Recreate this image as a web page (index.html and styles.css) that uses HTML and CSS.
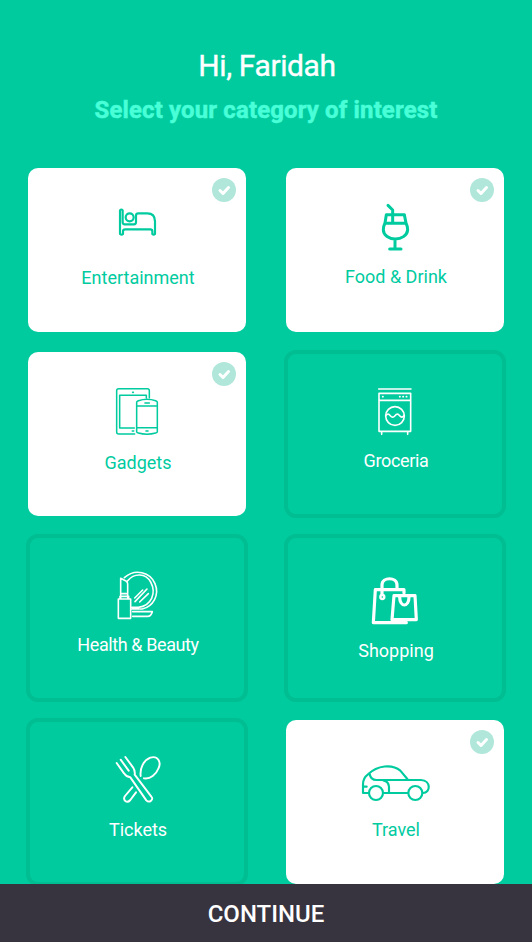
FILE: index.html
```html
<!DOCTYPE html>
<html lang="en">
<head>
<meta charset="utf-8">
<title>Select categories</title>
<link rel="stylesheet" href="styles.css">
</head>
<body>
<main class="screen">
  <header class="intro">
    <h1 class="greeting">Hi, Faridah</h1>
    <p class="prompt">Select your category of interest</p>
  </header>
  <section class="categories">
    <article class="card selected entertainment">
      <svg class="check" viewBox="0 0 24 24"><circle cx="12" cy="12" r="12"/><path d="M8 12.5l3 3 5.5-6"/></svg>
      <svg class="icon" viewBox="0 0 222 195" stroke-width="6.5"><path d="M60 117V46q4-5 8 0V82q0 6 6 6H102q6 0 6-6V62q0-7 7-7H142Q165 55 165 79V117q-4 4-8 0V109q0-6-6-6H76q-7 0-7 6V117q-4 4-9 0Z"/><circle cx="89" cy="67" r="12"/></svg>
      <span class="label">Entertainment</span>
    </article>
    <article class="card selected food">
      <svg class="check" viewBox="0 0 24 24"><circle cx="12" cy="12" r="12"/><path d="M8 12.5l3 3 5.5-6"/></svg>
      <svg class="icon" viewBox="-6 0 222 195" stroke-width="9"><path d="M84 31L98 45V84M79 59H133L138 84Q143 94 143 105C141 122 124 132 106 132S70 121 70 104Q70 94 75 84ZM75 85H138M105 133V162M89 162H123"/></svg>
      <span class="label">Food &amp; Drink</span>
    </article>
    <article class="card selected gadgets">
      <svg class="check" viewBox="0 0 24 24"><circle cx="12" cy="12" r="12"/><path d="M8 12.5l3 3 5.5-6"/></svg>
      <svg class="icon" viewBox="0 0 222 195" stroke-width="4.6"><path d="M148 53V32q0-6-6-6H56q-6 0-6 6V156q0 6 6 6H104M139 53V46H59V144H103M110 67Q110 64 115 62 141 53 167 62 172 64 172 67V155Q172 158 167 159 141 166 115 159 110 158 110 155ZM110 78H172M110 143H172"/><path stroke-width="5" d="M98 37h2M97 153h4M135 69h13M138 153h6"/></svg>
      <span class="label">Gadgets</span>
    </article>
    <article class="card outlined groceria">
      <svg class="icon" viewBox="-6 0 222 195" stroke-width="4.8"><path d="M56 27H153M57 40H152V154H57ZM57 61H152M65 155V163M143 155V163"/><circle cx="105" cy="108" r="28"/><path d="M77 107Q84 98 91 107T105 107 119 107 133 106"/><path stroke-width="5" d="M68 50h1M119 50h1M129 50h1M139 50h1"/></svg>
      <span class="label">Groceria</span>
    </article>
    <article class="card outlined health">
      <svg class="icon" viewBox="0 0 222 195" stroke-width="4.8"><path d="M62 94V49L78 57Q83 60 83 65V94M63 95H83V109M62 95V110M55 111H92V169H55ZM60 110V103H86V110M73 47C105 18 151 30 165 65 179 99 160 133 127 141H96M83 56C103 32 137 33 152 60 170 94 154 131 115 136H96M98 149H157Q153 163 143 163H98M105 119L141 81M119 120L145 95M104 108L128 84"/></svg>
      <span class="label">Health &amp; Beauty</span>
    </article>
    <article class="card outlined shopping">
      <svg class="icon" viewBox="-6 0 222 195" stroke-width="9.5"><path d="M66 79V51C66 26 111 26 111 51V62M132 75V65H46L40 164H139M102 83H165L169 155H96ZM119 87C119 119 147 119 147 87"/><circle cx="67" cy="87" r="6" stroke-width="7"/></svg>
      <span class="label">Shopping</span>
    </article>
    <article class="card outlined tickets">
      <svg class="icon" viewBox="0 0 222 195" stroke-width="5.8"><path d="M50 45L72 76Q79 87 91 88L139 157Q146 164 153 158T154 146L104 80Q106 69 99 58L76 27M62 35L86 68M97 118L75 144Q69 153 76 159T91 156L108 133M122 84C119 60 131 37 151 29 174 22 184 42 176 60 168 80 151 94 132 91"/></svg>
      <span class="label">Tickets</span>
    </article>
    <article class="card selected travel">
      <svg class="check" viewBox="0 0 24 24"><circle cx="12" cy="12" r="12"/><path d="M8 12.5l3 3 5.5-6"/></svg>
      <svg class="icon wide" viewBox="0 0 270 180" stroke-width="6.5"><path d="M57 114H39V88Q39 69 54 58C82 31 126 26 151 47L172 72M59 57Q62 75 79 75H213C244 76 242 114 219 114M100 114H173M100 76Q116 79 117 96V114M40 95H50"/><circle cx="78" cy="114" r="21"/><circle cx="196" cy="114" r="21"/></svg>
      <span class="label">Travel</span>
    </article>
  </section>
  <button class="continue" type="button">CONTINUE</button>
</main>
</body>
</html>
```
FILE: styles.css
```css
* { box-sizing: border-box; }
body { margin: 0; background: #00cb9f; font-family: Roboto, "Liberation Sans", sans-serif; }
.screen { width: 532px; height: 942px; display: flex; flex-direction: column; overflow: hidden; }
.intro { height: 168px; flex: none; padding-top: 46px; text-align: center; }
.greeting { margin: 0; padding-left: 2px; font-size: 30px; line-height: 40px; font-weight: 400; color: #fff; -webkit-text-stroke: .35px #fff; letter-spacing: -.4px; }
.prompt { margin: 8px 0 0; font-size: 24px; line-height: 32px; font-weight: 700; color: #48ffd8; -webkit-text-stroke: .5px #48ffd8; letter-spacing: .12px; }
.categories { display: grid; grid-template-columns: 218px 218px; grid-auto-rows: 164px; gap: 20px 40px; padding: 0 28px; height: 716px; flex: none; overflow: hidden; }
.card { position: relative; display: flex; flex-direction: column; align-items: center; border-radius: 10px; }
.selected { background: #fff; color: #00cb9f; }
.outlined { color: #fff; }
.outlined::before { content: ""; position: absolute; inset: -2px; border: 4px solid #00bd92; border-radius: 12px; }
.icon { width: 74px; height: 65px; flex: none; fill: none; stroke: currentColor; stroke-linecap: round; stroke-linejoin: round; }
.wide { width: 90px; height: 60px; }
.label { padding-left: 2px; font-size: 18px; line-height: 22px; white-space: nowrap; }
.check { position: absolute; top: 10px; right: 10px; width: 24px; height: 24px; fill: #b0e7da; }
.check path { fill: none; stroke: #fff; stroke-width: 3; stroke-linecap: round; stroke-linejoin: round; }
.entertainment { padding-top: 27px; gap: 7px; }
.food { padding-top: 27px; gap: 6px; }
.gadgets { padding-top: 28px; gap: 7px; }
.groceria { padding-top: 28px; gap: 5px; }
.groceria .label { letter-spacing: -.35px; }
.health { padding-top: 26px; gap: 7px; }
.health .label { letter-spacing: -.4px; }
.shopping { padding-top: 32px; gap: 7px; }
.tickets { padding-top: 28px; gap: 6px; }
.travel { padding-top: 35px; gap: 4px; }
.continue { height: 58px; flex: none; border: 0; padding: 2px 0 0; background: #37343f; color: #fff; font: 500 24px/32px Roboto, "Liberation Sans", sans-serif; }
```
